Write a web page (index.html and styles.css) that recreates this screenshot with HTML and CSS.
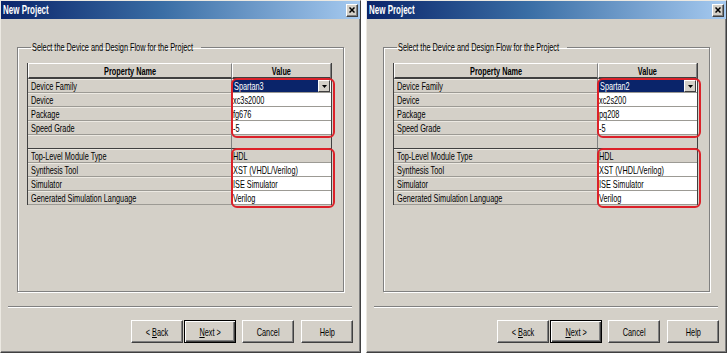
FILE: index.html
```html
<!DOCTYPE html>
<html lang="en">
<head>
    <meta charset="UTF-8">
    <meta name="viewport" content="width=device-width, initial-scale=1.0">
    <title>New Project</title>
    <link rel="stylesheet" href="styles.css">
</head>
<body>
    <div class="screen">
        <!-- Spartan3 dialog -->
        <div class="window">
            <div class="titlebar">
                <span class="title sq">New Project</span>
                <span class="close-button">
                    <svg width="6" height="6" viewBox="0 0 6 6"><path d="M0.5 0.5 L5.5 5.5 M5.5 0.5 L0.5 5.5" stroke="#000" stroke-width="1.5"/></svg>
                </span>
            </div>
            <fieldset class="group">
                <legend><span class="sq">Select the Device and Design Flow for the Project</span></legend>
                <div class="table-wrap">
                    <table class="props">
                        <tr><th class="name-col"><span class="sq">Property Name</span></th><th><span class="sq">Value</span></th></tr>
                        <tr><td class="prop"><span class="sq">Device Family</span></td><td class="val combo"><div class="combo-box"><span class="selected"><span class="sq">Spartan3</span></span><span class="drop"><svg width="5" height="3" viewBox="0 0 5 3"><path d="M0 0 L5 0 L2.5 3 Z" fill="#000"/></svg></span></div></td></tr>
                        <tr><td class="prop"><span class="sq">Device</span></td><td class="val"><span class="sq">xc3s2000</span></td></tr>
                        <tr><td class="prop"><span class="sq">Package</span></td><td class="val"><span class="sq">fg676</span></td></tr>
                        <tr><td class="prop"><span class="sq">Speed Grade</span></td><td class="val"><span class="sq">-5</span></td></tr>
                        <tr class="blank"><td class="prop"></td><td class="val static"></td></tr>
                        <tr><td class="prop"><span class="sq">Top-Level Module Type</span></td><td class="val static"><span class="sq">HDL</span></td></tr>
                        <tr><td class="prop"><span class="sq">Synthesis Tool</span></td><td class="val"><span class="sq">XST (VHDL/Verilog)</span></td></tr>
                        <tr><td class="prop"><span class="sq">Simulator</span></td><td class="val"><span class="sq">ISE Simulator</span></td></tr>
                        <tr><td class="prop"><span class="sq">Generated Simulation Language</span></td><td class="val"><span class="sq">Verilog</span></td></tr>
                    </table>
                    <div class="mark mark-device"></div>
                    <div class="mark mark-flow"></div>
                </div>
            </fieldset>
            <div class="separator"></div>
            <div class="buttons">
                <button class="back"><span class="sq">&lt; <u>B</u>ack</span></button>
                <button class="next"><span class="sq"><u>N</u>ext &gt;</span></button>
                <button class="cancel"><span class="sq">Cancel</span></button>
                <button><span class="sq">Help</span></button>
            </div>
        </div>

        <!-- Spartan2 dialog -->
        <div class="window">
            <div class="titlebar">
                <span class="title sq">New Project</span>
                <span class="close-button">
                    <svg width="6" height="6" viewBox="0 0 6 6"><path d="M0.5 0.5 L5.5 5.5 M5.5 0.5 L0.5 5.5" stroke="#000" stroke-width="1.5"/></svg>
                </span>
            </div>
            <fieldset class="group">
                <legend><span class="sq">Select the Device and Design Flow for the Project</span></legend>
                <div class="table-wrap">
                    <table class="props">
                        <tr><th class="name-col"><span class="sq">Property Name</span></th><th><span class="sq">Value</span></th></tr>
                        <tr><td class="prop"><span class="sq">Device Family</span></td><td class="val combo"><div class="combo-box"><span class="selected"><span class="sq">Spartan2</span></span><span class="drop"><svg width="5" height="3" viewBox="0 0 5 3"><path d="M0 0 L5 0 L2.5 3 Z" fill="#000"/></svg></span></div></td></tr>
                        <tr><td class="prop"><span class="sq">Device</span></td><td class="val"><span class="sq">xc2s200</span></td></tr>
                        <tr><td class="prop"><span class="sq">Package</span></td><td class="val"><span class="sq">pq208</span></td></tr>
                        <tr><td class="prop"><span class="sq">Speed Grade</span></td><td class="val"><span class="sq">-5</span></td></tr>
                        <tr class="blank"><td class="prop"></td><td class="val static"></td></tr>
                        <tr><td class="prop"><span class="sq">Top-Level Module Type</span></td><td class="val static"><span class="sq">HDL</span></td></tr>
                        <tr><td class="prop"><span class="sq">Synthesis Tool</span></td><td class="val"><span class="sq">XST (VHDL/Verilog)</span></td></tr>
                        <tr><td class="prop"><span class="sq">Simulator</span></td><td class="val"><span class="sq">ISE Simulator</span></td></tr>
                        <tr><td class="prop"><span class="sq">Generated Simulation Language</span></td><td class="val"><span class="sq">Verilog</span></td></tr>
                    </table>
                    <div class="mark mark-device"></div>
                    <div class="mark mark-flow"></div>
                </div>
            </fieldset>
            <div class="separator"></div>
            <div class="buttons">
                <button class="back"><span class="sq">&lt; <u>B</u>ack</span></button>
                <button class="next"><span class="sq"><u>N</u>ext &gt;</span></button>
                <button class="cancel"><span class="sq">Cancel</span></button>
                <button><span class="sq">Help</span></button>
            </div>
        </div>
    </div>
</body>
</html>
```

FILE: styles.css
```css
* {
    box-sizing: border-box;
}
body {
    margin: 0;
    background-color: #fff;
    font-family: "Liberation Sans", Arial, sans-serif;
    font-size: 11px;
    color: #000;
}
/* the screenshot text is squeezed sideways */
.sq {
    display: inline-block;
    white-space: nowrap;
    transform: scaleX(0.665);
    transform-origin: 0 50%;
}
.screen {
    display: flex;
}
.window {
    display: flex;
    flex-direction: column;
    width: 361px;
    height: 353px;
    background-color: #d4d0c8;
    border: 1px solid;
    border-color: #ece9e2 #404040 #404040 #ece9e2;
    box-shadow: inset -1px -1px 0 #808080;
}
.window + .window {
    margin-left: 5px;
}
.titlebar {
    display: flex;
    align-items: center;
    justify-content: space-between;
    height: 18px;
    padding: 0 2px 0 2px;
    background: linear-gradient(to right, #0a246a, #3a6ea5 45%, #a6caf0);
}
.title {
    color: #fff;
    font-weight: bold;
    font-size: 12px;
}
.close-button {
    display: flex;
    align-items: center;
    justify-content: center;
    width: 12px;
    height: 13px;
    background-color: #d4d0c8;
    border: 1px solid;
    border-color: #fff #404040 #404040 #fff;
    box-shadow: inset -1px -1px 0 #808080;
}

/* group box */
.group {
    margin: 22px 0 0 16px;
    padding: 9px 0 0 9px;
    width: 327px;
    height: 251px;
    border: 1px solid #808080;
    box-shadow: 1px 1px 0 #fff, inset 1px 1px 0 #fff;
}
.group legend {
    width: 170px;
    margin-left: 4px;
    padding: 0 1px;
    line-height: 13px;
}
.table-wrap {
    position: relative;
    width: 305px;
}
.props {
    width: 305px;
    table-layout: fixed;
    border-collapse: separate;
    border-spacing: 0;
    border-left: 1px solid #404040;
    border-right: 1px solid #404040;
}
.props th {
    height: 16px;
    padding: 1px 0 0;
    background-color: #d4d0c8;
    border-top: 1px solid #fff;
    border-left: 1px solid #fff;
    border-right: 1px solid #808080;
    border-bottom: 2px solid #404040;
    font-weight: bold;
    line-height: 12px;
}
.props th .sq {
    transform-origin: 50% 50%;
}
.props .name-col {
    width: 204px;
}
.props td {
    height: 14px;
    padding: 2px 0 0 3px;
    border-bottom: 1px solid #9c9a94;
    line-height: 11px;
    white-space: nowrap;
}
.props .prop {
    background-color: #d4d0c8;
    border-right: 1px solid #808080;
    box-shadow: inset 0 1px 0 #ece9e2;
}
.props .val {
    padding-left: 1px;
    background-color: #fff;
}
.props .val.static {
    background-color: #d4d0c8;
}
.props .blank td {
    border-bottom-color: #404040;
}
.props .val.combo {
    padding: 1px 1px 0 1px;
}
.combo-box {
    display: flex;
    height: 12px;
}
.combo-box .selected {
    flex: 1;
    padding: 1px 0 0 1px;
    background-color: #0a246a;
    color: #fff;
    line-height: 11px;
}
.combo-box .drop {
    display: flex;
    align-items: center;
    justify-content: center;
    width: 12px;
    background-color: #d4d0c8;
    border: 1px solid;
    border-color: #fff #404040 #404040 #fff;
}

/* red annotation boxes over the value column */
.mark {
    position: absolute;
    left: 204px;
    width: 104px;
    height: 60px;
    border: 2px solid #dc2129;
    border-radius: 6px;
}
.mark-device {
    top: 15px;
}
.mark-flow {
    top: 85px;
}

.separator {
    margin: 14px 8px 0 7px;
    border-top: 1px solid #808080;
    border-bottom: 1px solid #fff;
}
.buttons {
    display: flex;
    margin-top: 12px;
    padding-left: 130px;
}
.buttons button {
    width: 52px;
    height: 23px;
    margin-right: 7px;
    padding: 0;
    font: inherit;
    color: #000;
    background-color: #d4d0c8;
    border: 1px solid;
    border-color: #fff #404040 #404040 #fff;
    box-shadow: inset -1px -1px 0 #808080;
}
.buttons button .sq {
    transform-origin: 50% 50%;
}
.buttons .back {
    margin-right: 1px;
}
.buttons .next {
    margin-right: 6px;
    border-color: #000;
    box-shadow: inset 1px 1px 0 #fff, inset -1px -1px 0 #404040, inset -2px -2px 0 #808080;
}
```
